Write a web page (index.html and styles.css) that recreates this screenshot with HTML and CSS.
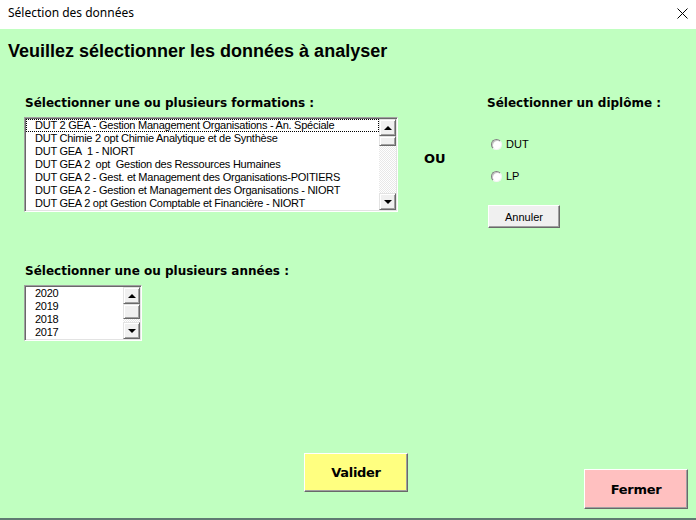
FILE: index.html
```html
<!DOCTYPE html>
<html lang="fr">
<head>
    <meta charset="UTF-8">
    <meta name="viewport" content="width=device-width, initial-scale=1.0">
    <title>Sélection des données</title>
    <link rel="stylesheet" href="styles.css">
</head>
<body>
    <div class="window">
        <div class="titlebar">
            <span class="caption">Sélection des données</span>
            <svg class="close" width="11" height="11" viewBox="0 0 11 11">
                <path d="M0.5 0.5 L10.5 10.5 M10.5 0.5 L0.5 10.5" stroke="#000" stroke-width="1" fill="none"/>
            </svg>
        </div>

        <div class="form">
            <h1 class="heading">Veuillez sélectionner les données à analyser</h1>

            <div class="top">
                <div class="formations">
                    <div class="label">Sélectionner une ou plusieurs formations :</div>
                    <div class="listbox listbox-formations">
                        <ul class="items">
                            <li class="focused">DUT 2 GEA - Gestion Management Organisations - An. Spéciale</li>
                            <li>DUT Chimie 2 opt Chimie Analytique et de Synthèse</li>
                            <li>DUT GEA &nbsp;1 - NIORT</li>
                            <li>DUT GEA 2 &nbsp;opt &nbsp;Gestion des Ressources Humaines</li>
                            <li>DUT GEA 2 - Gest. et Management des Organisations-POITIERS</li>
                            <li>DUT GEA 2 - Gestion et Management des Organisations - NIORT</li>
                            <li>DUT GEA 2 opt Gestion Comptable et Financière - NIORT</li>
                        </ul>
                        <div class="scrollbar">
                            <span class="sb-btn"><i class="arrow-up"></i></span>
                            <span class="sb-thumb thumb-small"></span>
                            <span class="sb-track"></span>
                            <span class="sb-btn"><i class="arrow-down"></i></span>
                        </div>
                    </div>
                </div>

                <div class="ou">OU</div>

                <div class="diplome">
                    <div class="label label-diplome">Sélectionner un diplôme :</div>
                    <label class="radio radio-first"><span class="radio-dot"></span>DUT</label>
                    <label class="radio"><span class="radio-dot"></span>LP</label>
                    <button class="btn btn-annuler">Annuler</button>
                </div>
            </div>

            <div class="annees">
                <div class="label">Sélectionner une ou plusieurs années :</div>
                <div class="listbox listbox-annees">
                    <ul class="items">
                        <li>2020</li>
                        <li>2019</li>
                        <li>2018</li>
                        <li>2017</li>
                    </ul>
                    <div class="scrollbar">
                        <span class="sb-btn"><i class="arrow-up"></i></span>
                        <span class="sb-thumb thumb-big"></span>
                        <span class="sb-track"></span>
                        <span class="sb-btn"><i class="arrow-down"></i></span>
                    </div>
                </div>
            </div>

            <div class="actions">
                <button class="btn btn-big btn-valider">Valider</button>
                <button class="btn btn-big btn-fermer">Fermer</button>
            </div>
        </div>
    </div>
</body>
</html>
```

FILE: styles.css
```css
:root {
    --form-green: #c0ffc0;
    --face: #f0f0f0;
    --shadow-dark: #696969;
    --shadow: #a0a0a0;
    --light: #e3e3e3;
}

* {
    margin: 0;
    padding: 0;
    box-sizing: border-box;
}

body {
    width: 696px;
    height: 520px;
    overflow: hidden;
    background-color: var(--form-green);
    color: #000;
    font-family: "DejaVu Sans", sans-serif;
}

.window {
    display: flex;
    flex-direction: column;
    height: 520px;
}

/* title bar */
.titlebar {
    height: 29px;
    background-color: #fff;
    display: flex;
    justify-content: space-between;
    align-items: flex-start;
    padding: 5px 8px 0 8px;
}

.caption {
    font-family: "Noto Sans", "Open Sans", sans-serif;
    font-size: 12px;
    line-height: 16px;
}

.close {
    margin-top: 3px;
}

/* form body */
.form {
    flex: 1;
    background-color: var(--form-green);
    border-bottom: 2px solid #5f7a72;
    padding: 0 8px 0 24px;
    display: flex;
    flex-direction: column;
}

.heading {
    font-family: "Liberation Sans", Arial, sans-serif;
    font-size: 18px;
    line-height: 22px;
    font-weight: bold;
    margin: 11px 0 0 -16px;
}

.label {
    font-size: 12px;
    line-height: 15px;
    font-weight: bold;
    padding-left: 1px;
}

.label-diplome {
    padding-left: 0;
    margin-left: -1px;
}

.top {
    display: grid;
    grid-template-columns: 374px 90px 1fr;
    align-items: start;
    margin-top: 34px;
}

/* list boxes */
.listbox {
    display: flex;
    margin-top: 6px;
    background-color: #fff;
    border: 1px solid;
    border-color: var(--shadow) #fff #fff var(--shadow);
    box-shadow: inset 1px 1px var(--shadow-dark), inset -1px -1px var(--light);
    padding: 1px;
}

.listbox-formations {
    width: 374px;
    height: 95px;
}

.listbox-annees {
    width: 118px;
    height: 56px;
}

.items {
    flex: 1;
    list-style: none;
    font-family: "Liberation Sans", Arial, sans-serif;
    font-size: 11px;
    line-height: 13px;
    letter-spacing: -0.25px;
    white-space: nowrap;
    overflow: hidden;
}

.items li {
    padding-left: 9px;
    height: 13px;
}

.items li.focused {
    outline: 1px dotted #000;
    outline-offset: -1px;
}

.scrollbar {
    width: 17px;
    display: flex;
    flex-direction: column;
}

.sb-btn,
.sb-thumb {
    display: flex;
    align-items: center;
    justify-content: center;
    background-color: var(--face);
    border: 1px solid;
    border-color: var(--light) var(--shadow-dark) var(--shadow-dark) var(--light);
    box-shadow: inset 1px 1px #fff, inset -1px -1px var(--shadow);
}

.sb-btn {
    height: 17px;
}

.thumb-small {
    height: 10px;
}

.thumb-big {
    height: 15px;
}

.sb-track {
    flex: 1;
    background: repeating-conic-gradient(#e8e8e8 0 25%, #fff 0 50%) 0 0 / 2px 2px;
}

.arrow-up,
.arrow-down {
    width: 0;
    height: 0;
    border-left: 4px solid transparent;
    border-right: 4px solid transparent;
}

.arrow-up {
    border-bottom: 4px solid #000;
}

.arrow-down {
    border-top: 4px solid #000;
}

/* OU */
.ou {
    font-size: 13px;
    line-height: 16px;
    font-weight: bold;
    margin-top: 55px;
    padding-left: 26px;
}

/* diplome */
.diplome {
    display: flex;
    flex-direction: column;
    align-items: flex-start;
}

.radio {
    display: flex;
    align-items: center;
    gap: 4px;
    font-family: "Liberation Sans", Arial, sans-serif;
    font-size: 11px;
    line-height: 13px;
    margin-top: 19px;
    padding-left: 3px;
}

.radio-first {
    margin-top: 27px;
}

.radio-dot {
    width: 11px;
    height: 11px;
    border-radius: 50%;
    background-color: #fff;
    border: 1px solid;
    border-color: #808080 #f4f4f4 #f4f4f4 #808080;
    box-shadow: inset 1px 1px #c8c8c8;
}

.btn {
    background-color: var(--face);
    border: 1px solid;
    border-color: #fff var(--shadow-dark) var(--shadow-dark) #fff;
    box-shadow: inset -1px -1px var(--shadow);
    color: #000;
    font-family: "Liberation Sans", Arial, sans-serif;
    font-size: 11px;
}

.btn-annuler {
    width: 72px;
    height: 23px;
    margin-top: 22px;
}

/* annees */
.annees {
    margin-top: 36px;
}

/* bottom buttons */
.actions {
    display: flex;
    align-items: flex-start;
    margin-top: 112px;
    padding-left: 280px;
}

.btn-big {
    width: 104px;
    font-family: "DejaVu Sans", sans-serif;
    font-size: 13px;
    font-weight: bold;
    letter-spacing: -0.3px;
}

.btn-valider {
    height: 39px;
    background-color: #ffff80;
}

.btn-fermer {
    height: 40px;
    margin: 16px 0 0 auto;
    background-color: #ffc0c0;
}
```
